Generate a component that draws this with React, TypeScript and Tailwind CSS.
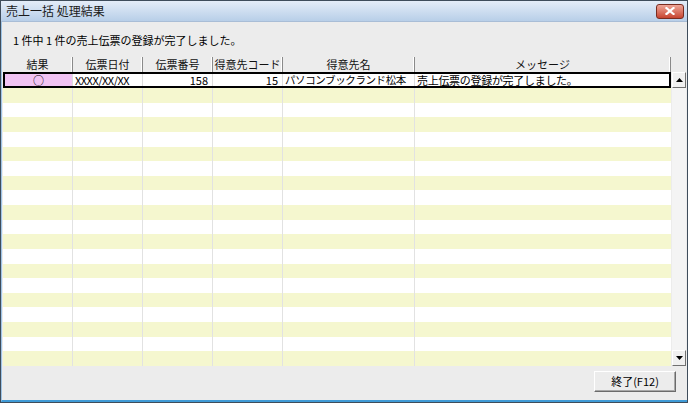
import React from 'react';

const font = { fontFamily: '"Noto Sans CJK JP", "Liberation Sans", sans-serif' };

type Col = { label: string; w: string; align: string };

const cols: Col[] = [
  { label: '結果', w: 'w-[70px]', align: 'justify-center' },
  { label: '伝票日付', w: 'w-[70px]', align: 'justify-start pl-[2px] tracking-[-0.5px]' },
  { label: '伝票番号', w: 'w-[70px]', align: 'justify-end pr-[4px]' },
  { label: '得意先コード', w: 'w-[70px]', align: 'justify-end pr-[4px]' },
  { label: '得意先名', w: 'w-[132px]', align: 'justify-start pl-[2px] tracking-[-0.4px]' },
  { label: 'メッセージ', w: 'flex-1', align: 'justify-start pl-[2px] tracking-[-0.3px]' },
];

const firstRow = ['○', 'XXXX/XX/XX', '158', '15', 'パソコンブックランド松本', '売上伝票の登録が完了しました。'];

const ScrollButton = ({ up }: { up: boolean }) => (
  <div className="h-[16px] w-[14px] bg-[#f0f0f0] border border-t-white border-l-white border-r-[#707070] border-b-[#707070] flex items-center justify-center">
    <svg width="7" height="4" viewBox="0 0 7 4">
      {up ? <path d="M3.5 0 L7 4 L0 4 Z" fill="#000" /> : <path d="M0 0 L7 0 L3.5 4 Z" fill="#000" />}
    </svg>
  </div>
);

export default function App() {
  // 空行（19行）
  const emptyRows = Array.from({ length: 19 }, (_, i) => i);

  return (
    <div
      className="w-[688px] h-[403px] flex flex-col border border-[#3f4d5b] bg-[#ececec] text-[11px] text-black overflow-hidden"
      style={font}
    >
      {/* タイトルバー */}
      <div className="h-[21px] shrink-0 flex items-center justify-between pl-[5px] pr-[3px] bg-gradient-to-b from-[#e4edf8] to-[#b8cfe8] border-b border-[#a9bdd6]">
        <span className="text-[12px] leading-none text-[#1a1a1a]">売上一括 処理結果</span>
        <div className="w-[28px] h-[15px] rounded-[3px] border border-[#7a2c20] bg-gradient-to-b from-[#eea598] to-[#c6432f] flex items-center justify-center">
          <svg width="10" height="8" viewBox="0 0 10 8">
            <path d="M1.5 1 L8.5 7 M8.5 1 L1.5 7" stroke="#fff" strokeWidth="2.2" strokeLinecap="square" />
          </svg>
        </div>
      </div>

      <div className="flex-1 flex flex-col border-l border-[#9ec4e6] border-b-2 border-b-[#3f9ad6]">
        {/* メッセージ */}
        <div className="h-[35px] flex items-center pl-[11px] pt-[2px] leading-none whitespace-pre">1 件中 1 件の売上伝票の登録が完了しました。</div>

        <div className="flex flex-col pl-[1px]">
          {/* ヘッダー */}
          <div className="flex w-[668px] h-[15px]">
            {cols.map((c) => (
              <div
                key={c.label}
                className={`${c.w} flex items-center justify-center leading-none border-r border-r-[#8a8a8a] shadow-[inset_-1px_0_0_#ffffff] text-[#111]`}
              >
                {c.label}
              </div>
            ))}
          </div>

          <div className="flex">
            {/* 明細 */}
            <div className="w-[668px] flex flex-col">
              <div className="h-[16px] flex border-2 border-black bg-white leading-[12px]">
                {cols.map((c, i) => (
                  <div
                    key={c.label}
                    className={`${i === 0 ? 'w-[68px] bg-[#f1c3f3]' : c.w} flex items-center ${c.align} border-r border-[#dcdcdc] last:border-r-0 whitespace-nowrap ${i === 4 ? 'text-[10.5px]' : ''}`}
                  >
                    {firstRow[i]}
                  </div>
                ))}
              </div>
              <div className="h-[278px] flex flex-col">
                {emptyRows.map((r) => (
                  <div key={r} className={`flex-1 flex ${r % 2 === 0 ? 'bg-[#f5f7cf]' : 'bg-white'}`}>
                    {cols.map((c) => (
                      <div key={c.label} className={`${c.w} border-r border-[#e2e2e2] last:border-r-0`} />
                    ))}
                  </div>
                ))}
              </div>
            </div>

            {/* スクロールバー */}
            <div className="w-[14px] ml-[1px] flex flex-col bg-[#f4f4f4]">
              <ScrollButton up />
              <div className="flex-1" />
              <ScrollButton up={false} />
            </div>
          </div>
        </div>

        {/* フッター */}
        <div className="flex-1 flex justify-end items-start pt-[5px] pr-[11px]">
          <button className="w-[82px] h-[21px] bg-[#ececec] border border-t-white border-l-white border-r-[#6b6b6b] border-b-[#6b6b6b] shadow-[inset_-1px_-1px_0_#a8a8a8] text-[11px] leading-none flex items-center justify-center">
            終了(F12)
          </button>
        </div>
      </div>
    </div>
  );
}
